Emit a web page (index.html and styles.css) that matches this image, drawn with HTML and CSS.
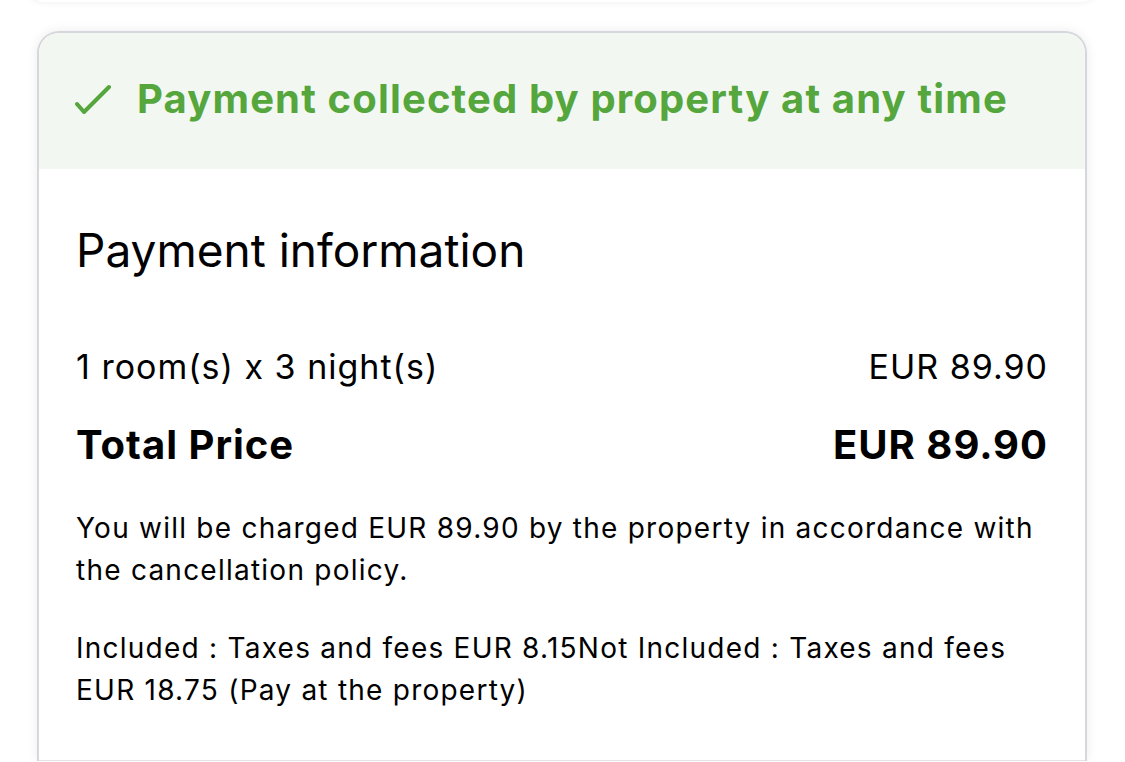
FILE: index.html
```html
<!DOCTYPE html>
<html lang="en">
<head>
    <meta charset="UTF-8">
    <meta name="viewport" content="width=device-width, initial-scale=1.0">
    <title>Payment information</title>
    <link rel="stylesheet" href="styles.css">
</head>
<body>
    <div class="prev-card"></div>

    <div class="card">
        <div class="notice">
            <svg class="check" width="36" height="30" viewBox="0 0 36 30">
                <path d="M2 20 L9 28 L34 3" fill="none" stroke="#55a63c" stroke-width="4" stroke-linecap="round" stroke-linejoin="round"/>
            </svg>
            <span>Payment collected by property at any time</span>
        </div>

        <div class="content">
            <h2>Payment information</h2>
            <div class="row">
                <span>1 room(s) x 3 night(s)</span>
                <span>EUR 89.90</span>
            </div>
            <div class="row total">
                <span>Total Price</span>
                <span>EUR 89.90</span>
            </div>
            <p>You will be charged EUR 89.90 by the property in accordance with the cancellation policy.</p>
            <p class="last">Included : Taxes and fees EUR 8.15Not Included : Taxes and fees EUR 18.75 (Pay at the property)</p>
        </div>
        <div class="divider"></div>
    </div>
</body>
</html>
```

FILE: styles.css
```css
body {
    margin: 0;
    background-color: #fff;
    font-family: Inter, "Noto Sans", sans-serif;
    color: #000;
    overflow: hidden;
}

/* bottom edge of the card above */
.prev-card {
    height: 20px;
    margin: -18px 25px 0 25px;
    border-radius: 0 0 20px 20px;
    box-shadow: 0 1px 6px rgba(0,0,0,0.06);
}

.card {
    margin: 29px 38px 0 37px;
    border: 2px solid #d6d6dd;
    border-bottom: none;
    border-radius: 22px 22px 0 0;
    box-shadow: 0 0 12px rgba(0,0,0,0.08);
    overflow: hidden;
}

.notice {
    display: flex;
    align-items: center;
    height: 131px;
    padding: 0 0 5px 36px;
    background-color: #f2f7f1;
    color: #55a63c;
    font-size: 40px;
    font-weight: 700;
    letter-spacing: 1.15px;
}

.check {
    margin-right: 26px;
}

.content {
    padding: 53px 37px 49px 37px;
}

h2 {
    margin: 0 0 67px 0;
    font-size: 46px;
    font-weight: 400;
    line-height: 56px;
}

.row {
    display: flex;
    justify-content: space-between;
    font-size: 34px;
    line-height: 44px;
    letter-spacing: 1px;
    margin-bottom: 31px;
}

.row.total {
    font-size: 40px;
    font-weight: 700;
    line-height: 50px;
    letter-spacing: 1px;
    margin-bottom: 37px;
}

p {
    margin: 0 0 36px 0;
    font-size: 28px;
    line-height: 42px;
    letter-spacing: 1.24px;
}

p.last {
    margin-bottom: 0;
}

.divider {
    height: 1px;
    background-color: #e4e4e8;
}
```
